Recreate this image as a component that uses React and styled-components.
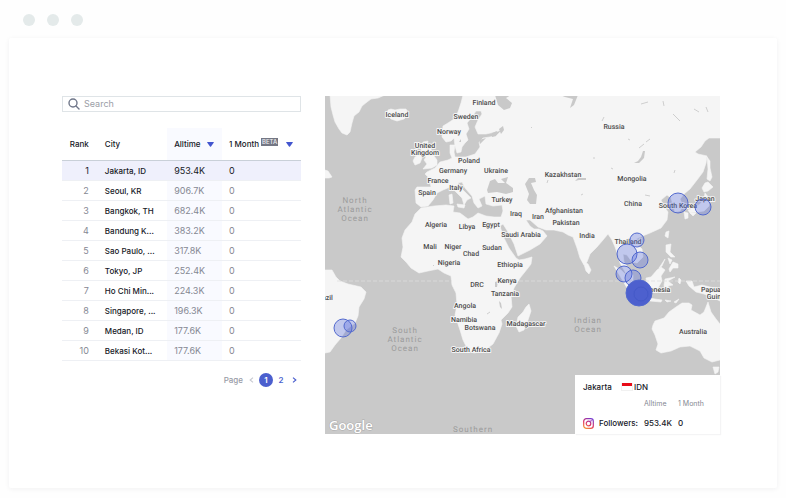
import React, { useState } from "react";
import styled, { createGlobalStyle } from "styled-components";

const GlobalStyle = createGlobalStyle`
  * { box-sizing: border-box; }
  body {
    margin: 0;
    background: #fefefe;
    color: #16181f;
    font-family: Inter, "Liberation Sans", sans-serif;
    font-size: 8px;
    line-height: 12px;
  }
  button, input { font: inherit; color: inherit; }
`;

const Page = styled.div`
  display: flex;
  flex-direction: column;
  min-height: 100vh;
  padding: 0 9px 10px;
`;

const WindowBar = styled.header`
  display: flex;
  align-items: center;
  gap: 12px;
  height: 38px;
  padding: 2px 0 0 14px;
`;

const Dot = styled.span`
  width: 12px;
  height: 12px;
  border-radius: 50%;
  background: #e4eaea;
`;

const Card = styled.main`
  flex: 1;
  display: grid;
  grid-template-columns: minmax(0, 239fr) minmax(0, 395fr);
  align-items: start;
  gap: 24px;
  padding: 58px 57px 54px 53px;
  background: #fff;
  border-radius: 2px;
  box-shadow: 0 1px 5px rgba(30, 40, 50, 0.06);
`;

const Panel = styled.section`
  display: flex;
  flex-direction: column;
`;

const SearchBox = styled.label`
  display: flex;
  align-items: center;
  gap: 4px;
  height: 16px;
  padding: 0 5px;
  border: 1px solid #dfe4e7;
  color: #70778a;
`;

const SearchInput = styled.input`
  flex: 1;
  min-width: 0;
  padding: 0;
  border: 0;
  outline: 0;
  background: none;
  color: #16181f;
  font-size: 9px;
  &::placeholder { color: #9b9ea6; opacity: 1; }
`;

const Table = styled.table`
  width: 100%;
  margin-top: 16px;
  table-layout: fixed;
  border-collapse: separate;
  border-spacing: 0;
`;

const Column = styled.col`
  width: ${(p) => p.$share}%;
`;

const HeadCell = styled.th`
  height: 33px;
  padding: ${(p) => (p.$right ? "0 9px 0 0" : "0 0 0 7px")};
  border-bottom: 1px solid #c9d0d8;
  background: ${(p) => (p.$tint ? "#f9faff" : "transparent")};
  text-align: ${(p) => (p.$right ? "right" : "left")};
  font-weight: 500;
  font-size: 8px;
  white-space: nowrap;
`;

const HeadContent = styled.span`
  display: flex;
  align-items: center;
  justify-content: space-between;
  padding-right: 8px;
`;

const Beta = styled.sup`
  display: inline-block;
  margin-left: 2px;
  padding: 0 1px;
  background: #747784;
  color: #f1f1f4;
  font-size: 6px;
  line-height: 8px;
  vertical-align: 3px;
`;

const SortButton = styled.button`
  display: flex;
  padding: 0;
  border: 0;
  background: none;
  color: #4356cf;
  cursor: pointer;
`;

const Row = styled.tr`
  background: ${(p) => (p.$active ? "#eff0fc" : "transparent")};
  color: ${(p) => (p.$active ? "#16181f" : "#858893")};
`;

const Cell = styled.td`
  height: 20px;
  padding: ${(p) => (p.$right ? "0 9px 0 0" : "0 0 0 7px")};
  border-bottom: 1px solid #eef0f4;
  background: ${(p) => (p.$tint ? "#f9faff" : "transparent")};
  text-align: ${(p) => (p.$right ? "right" : "left")};
  font-size: 9px;
  white-space: nowrap;
`;

const CityCell = styled(Cell)`
  color: #16181f;
  font-size: 8px;
  font-weight: 500;
`;

const Pager = styled.nav`
  display: flex;
  align-items: center;
  justify-content: flex-end;
  gap: 3px;
  margin-top: 12px;
  padding-right: 2px;
  color: #989ba6;
  font-weight: 500;
`;

const PageButton = styled.button`
  display: flex;
  align-items: center;
  justify-content: center;
  width: ${(p) => (p.$current ? "14px" : "10px")};
  height: 14px;
  padding: 0;
  border: 0;
  border-radius: 7px;
  background: ${(p) => (p.$current ? "#4b5fce" : "none")};
  color: ${(p) => (p.$current ? "#fff" : p.disabled ? "#c8cad2" : "#4b5fce")};
  font-weight: 600;
`;

const MapFrame = styled.section`
  position: relative;
`;

const MapDrawing = styled.svg`
  display: block;
  width: 100%;
  height: auto;
  background: #c9c9c9;
`;

const Country = styled.text`
  fill: #4c4c4c;
  stroke: #f5f5f5;
  stroke-width: 2px;
  stroke-linejoin: round;
  paint-order: stroke;
  font: 500 7px Roboto, sans-serif;
  text-rendering: geometricPrecision;
  text-anchor: middle;
`;

const Ocean = styled.text`
  fill: #9b9b9b;
  font: 400 8px Roboto, sans-serif;
  letter-spacing: 1px;
  text-rendering: geometricPrecision;
  text-anchor: middle;
`;

const Logo = styled.text`
  fill: #fff;
  stroke: #aaa;
  stroke-width: 1px;
  paint-order: stroke;
  font: 600 13px "Open Sans", sans-serif;
`;

const Bubble = styled.circle`
  fill: ${(p) => (p.$solid ? "#4d60ce" : "rgba(83, 106, 220, 0.32)")};
  stroke: #5269ce;
  stroke-width: 1;
`;

const Popup = styled.aside`
  position: absolute;
  right: 0;
  bottom: 0;
  width: 145px;
  padding: 6px 8px 5px;
  background: #fff;
  box-shadow: 1px 1px 1px rgba(30, 40, 50, 0.05);
`;

const Place = styled.div`
  display: flex;
  align-items: center;
  font-weight: 500;
`;

const PlaceName = styled.span`
  width: 38px;
`;

const Flag = styled.span`
  width: 12px;
  height: 8px;
  margin-right: 1px;
  border: 1px solid #f1f1f1;
  border-top: 0;
  background: linear-gradient(#e80c18 50%, #fff 50%);
`;

const Stats = styled.table`
  margin-top: 5px;
  border-collapse: collapse;
`;

const StatHead = styled.th`
  padding: 0 0 7px;
  color: #858893;
  font-size: 7px;
  font-weight: 400;
  text-align: left;
`;

const StatLabel = styled.th`
  width: 61px;
  padding: 0;
  font-weight: 500;
  text-align: left;
`;

const StatName = styled.span`
  display: flex;
  align-items: center;
  gap: 5px;
`;

const StatValue = styled.td`
  width: 34px;
  padding: 0;
  font-weight: 500;
`;

const cities = [
  ["Jakarta, ID", "953.4K"],
  ["Seoul, KR", "906.7K"],
  ["Bangkok, TH", "682.4K"],
  ["Bandung K...", "383.2K"],
  ["Sao Paulo, ...", "317.8K"],
  ["Tokyo, JP", "252.4K"],
  ["Ho Chi Min...", "224.3K"],
  ["Singapore, ...", "196.3K"],
  ["Medan, ID", "177.6K"],
  ["Bekasi Kot...", "177.6K"],
];

const land = [
  // Greenland, Newfoundland, Iceland, British Isles
  "M330 95L331 107 333 115 335 122 339 129 342 133 347 135 350 132 352 123 354 116 359 112 362 106 367 102 371 99 378 98 385 95Z",
  "M325 170L328 171 330 174 332 177 329 178 325 178Z",
  "M388 110L391 109 395 110 400 109 406 109 409 114 404 119 397 121 391 119 387 115Z",
  "M423 142L428 141 427 146 431 149 434 156 437 160 437 165 432 168 423 169 427 164 424 160 426 157 421 150Z",
  "M415 157L420 154 422 158 420 163 415 165 413 161Z",
  // Europe, Africa and Asia
  "M463 95L461 103 458 112 454 119 448 123 443 126 442 137 446 142 451 141 454 138 455 146 457 153 461 152 462 147 465 143 468 140 466 134 469 129 467 123 472 117 476 111 481 111 482 114 478 120 475 127 478 134 486 134 495 132 502 130 496 136 483 138 479 142 480 147 475 154 466 157 455 157 454 152 455 145 450 145 450 153 452 158 448 160 440 162 435 168 427 172 425 174 429 178 431 187 417 187 415 190 416 203 421 207 428 206 433 200 437 193 443 190 450 187 455 191 462 198 464 205 467 200 471 198 465 192 459 186 458 183 462 182 465 188 472 196 474 203 478 208 482 206 479 199 485 196 486 204 493 206 502 205 503 211 501 217 494 217 486 216 478 213 473 217 468 219 460 213 453 212 454 206 446 205 434 206 421 208 415 214 412 222 405 230 402 238 403 247 401 257 406 262 411 268 419 273 428 271 438 269 444 273 451 276 452 285 456 293 457 305 455 315 460 330 463 340 468 350 474 353 484 351 493 344 499 333 502 324 501 320 508 313 512 307 511 296 514 288 520 278 528 268 531 264 532 257 525 259 519 260 516 258 509 248 503 236 500 226 503 224 508 232 514 244 518 256 530 250 540 244 547 236 543 231 539 229 534 229 530 226 526 220 530 220 538 227 546 230 554 230 563 232 568 235 573 237 577 248 580 258 584 265 587 262 590 254 597 247 603 240 608 234 612 240 615 247 618 255 620 263 624 270 628 277 633 281 633 275 629 269 624 262 623 254 627 255 632 262 637 263 643 257 642 249 637 244 636 239 640 237 650 233 661 228 667 220 668 212 663 205 661 200 667 195 671 198 673 205 675 212 680 211 683 206 680 199 684 194 690 189 697 180 703 172 706 163 707 156 698 154 695 152 701 147 705 141 709 138 720 138 720 95Z",
  // Mediterranean and Indian Ocean islands
  "M449 195L452 194 453 203 450 204ZM457 204L465 205 464 208 458 207Z",
  "M583 261L588 264 591 270 589 274 586 271Z",
  "M529 304L531 311 528 320 524 330 519 332 516 326 518 317 523 312 526 307Z",
  // Japan and Sakhalin
  "M707 157L710 161 710 168 712 177 710 181 707 179 708 169Z",
  "M705 183L708 182 713 187 708 191 704 192 702 188Z",
  "M705 193L709 198 709 206 704 211 697 212 690 213 688 210 695 208 701 203 704 199ZM684 212L688 213 688 218 685 219ZM690 213L696 213 693 216Z",
  // Taiwan and Philippines
  "M666 232L669 231 668 238 665 236Z",
  "M666 245L671 244 670 252 675 257 671 257 666 252ZM673 262L678 264 678 268 673 268 670 272 669 269ZM668 258L672 260 670 264ZM659 268L665 259 662 266Z",
  // Indonesia and New Guinea
  "M614 266L621 270 631 280 637 290 635 294 627 288 620 276Z",
  "M646 278L651 277 657 270 661 267 665 270 661 276 662 281 658 288 651 289 647 286Z",
  "M665 279L675 277 668 281 673 285 668 286 670 291 665 291 664 285Z",
  "M644 297L655 299 662 300 661 302 650 301ZM665 300L671 301 667 302ZM674 302L679 299 676 303Z",
  "M679 278L681 280 680 284 678 282Z",
  "M686 281L692 281 694 287 702 285 714 288 720 291 720 301 712 297 704 294 696 292 689 286Z",
  // Australia and Tasmania
  "M653 325L655 321 664 318 669 312 676 307 682 303 689 303 692 305 691 310 700 315 704 312 708 302 711 312 716 319 720 324 720 360 712 362 704 358 700 351 696 349 690 346 680 347 671 351 661 353 656 350 658 344 655 335 652 329Z",
  "M713 367L719 367 718 372 715 374Z",
  // Brazil
  "M325 270L332 270 336 277 340 281 348 284 361 287 366 292 364 299 359 307 358 316 355 323 346 330 341 338 335 345 330 352 325 353Z",
];

const lakes = [
  "M487 190L490 181 495 179 498 183 505 183 501 179 508 177 506 183 513 188 513 192 506 194 497 192 488 193Z",
  "M525 184L529 178 535 178 536 182 531 183 534 190 537 195 536 204 530 204 527 200 529 194Z",
  "M495 95L498 105 504 110 510 108 512 103 506 98 511 95ZM560 95L578 95 574 105 570 108 573 99 565 97Z",
  "M479 140L486 138 480 144ZM492 133L497 131 496 136 492 137ZM499 129L503 126 504 130 501 134ZM461 139L459 142 461 142Z",
  "M634 163L638 161 641 157 643 151 645 151 644 158 639 163Z",
  "M495 282L498 281 497 287 495 287ZM499 301L501 303 502 309 500 307ZM575 181L578 178 586 178 586 180 579 180Z",
  "M668 205L673 205 674 208 669 209Z",
];

const countries = [
  ["Finland", 484, 105], ["Sweden", 466, 119], ["Norway", 449, 134], ["Iceland", 397, 117],
  ["United", 425, 148], ["Kingdom", 425, 155], ["Poland", 469, 163], ["Germany", 453, 173],
  ["Ukraine", 496, 173], ["France", 438, 183], ["Italy", 456, 190], ["Spain", 427, 195],
  ["Turkey", 502, 202], ["Iraq", 516, 216], ["Iran", 538, 219], ["Algeria", 436, 227],
  ["Libya", 467, 229], ["Egypt", 491, 227], ["Saudi Arabia", 521, 237], ["Mali", 430, 249],
  ["Niger", 453, 249], ["Chad", 471, 256], ["Sudan", 492, 250], ["Nigeria", 449, 265],
  ["Ethiopia", 510, 267], ["Kenya", 507, 283], ["DRC", 477, 287], ["Tanzania", 505, 296],
  ["Angola", 465, 308], ["Namibia", 464, 322], ["Botswana", 480, 330], ["South Africa", 471, 352],
  ["Madagascar", 526, 326], ["Russia", 614, 129], ["Kazakhstan", 563, 177], ["Mongolia", 632, 181],
  ["China", 633, 206], ["Afghanistan", 564, 213], ["Pakistan", 566, 225], ["India", 587, 238],
  ["South Korea", 678, 208], ["Japan", 705, 201], ["Thailand", 628, 244], ["Indonesia", 655, 292],
  ["Papua", 711, 292], ["Guin", 714, 299], ["Australia", 693, 334], ["Brazil", 324, 300],
];

const oceans = [
  ["North", 355, 203], ["Atlantic", 355, 212], ["Ocean", 355, 221],
  ["South", 405, 333], ["Atlantic", 405, 342], ["Ocean", 405, 351],
  ["Indian", 588, 323], ["Ocean", 588, 332], ["Southern", 473, 432],
];

const bubbles = [
  [343, 328, 9], [350, 326, 6], [678, 203, 10], [703, 207, 8], [637, 240, 7],
  [627, 254, 10], [640, 260, 8], [624, 274, 8], [633, 278, 8],
];

function SearchIcon() {
  return (
    <svg width="12" height="12" viewBox="0 0 12 12" fill="none" stroke="currentColor" strokeWidth="1.4" aria-hidden="true">
      <circle cx="5" cy="5" r="4" />
      <path d="M8 8L11 11" strokeLinecap="round" />
    </svg>
  );
}

function Sort({ label }) {
  return (
    <SortButton type="button" aria-label={label}>
      <svg width="7" height="5" viewBox="0 0 7 5" fill="currentColor" aria-hidden="true">
        <path d="M.4 0H6.6Q7 .3 6.7.8L4 4.6Q3.5 5 3 4.6L.3.8Q0 .3.4 0Z" />
      </svg>
    </SortButton>
  );
}

function Chevron({ back }) {
  return (
    <svg width="5" height="6" viewBox="0 0 5 6" fill="none" stroke="currentColor" strokeWidth="1.2" aria-hidden="true">
      <path d={back ? "M4 .6L1.2 3 4 5.4" : "M1 .6L3.8 3 1 5.4"} />
    </svg>
  );
}

function InstagramIcon() {
  return (
    <svg width="11" height="11" viewBox="0 0 11 11" fill="none" aria-hidden="true">
      <defs>
        <linearGradient id="insta" x1="2" y1="11" x2="8" y2="0" gradientUnits="userSpaceOnUse">
          <stop stopColor="#f6a02c" />
          <stop offset=".45" stopColor="#e2305c" />
          <stop offset="1" stopColor="#713bd4" />
        </linearGradient>
      </defs>
      <g stroke="url(#insta)" strokeWidth="1.2">
        <rect x=".7" y=".7" width="9.6" height="9.6" rx="2.6" />
        <circle cx="5.5" cy="5.5" r="2.3" />
      </g>
      <circle cx="8.1" cy="2.8" r=".7" fill="#9a35be" />
    </svg>
  );
}

function CityTable() {
  return (
    <Table>
      <colgroup>
        <Column $share={15} />
        <Column $share={29} />
        <Column $share={23} />
        <Column $share={33} />
      </colgroup>
      <thead>
        <tr>
          <HeadCell scope="col" $right>Rank</HeadCell>
          <HeadCell scope="col">City</HeadCell>
          <HeadCell scope="col" $tint>
            <HeadContent>Alltime<Sort label="Sort by all time" /></HeadContent>
          </HeadCell>
          <HeadCell scope="col">
            <HeadContent>
              <span>1 Month<Beta>BETA</Beta></span>
              <Sort label="Sort by one month" />
            </HeadContent>
          </HeadCell>
        </tr>
      </thead>
      <tbody>
        {cities.map(([city, total], i) => (
          <Row key={city} $active={i === 0}>
            <Cell $right>{i + 1}</Cell>
            <CityCell>{city}</CityCell>
            <Cell $tint={i > 0}>{total}</Cell>
            <Cell>0</Cell>
          </Row>
        ))}
      </tbody>
    </Table>
  );
}

function WorldMap() {
  return (
    <MapDrawing viewBox="325 96 395 338" role="img" aria-label="Followers by city">
      <g fill="#f5f5f5" stroke="#f5f5f5" strokeWidth=".6" strokeLinejoin="round">
        {land.map((d) => <path key={d} d={d} />)}
      </g>
      <g fill="#c9c9c9">
        {lakes.map((d) => <path key={d} d={d} />)}
      </g>
      <path
        fill="none"
        stroke="#c4c4c4"
        strokeWidth=".8"
        d="M602 121L604 117M663 101L664 106M641 104L648 102M673 114L680 121M628 139L630 140M639 148L644 144M646 142L650 139M694 109L699 112M706 107L708 112M675 170L674 173M581 195L583 194M611 168L613 169M531 127L532 128M593 158L595 158M645 195L650 196M547 183L548 180M487 314L490 312M433 265L434 266"
      />
      <path d="M337 281H452M519 281H720" stroke="#dedede" strokeWidth=".8" strokeDasharray="4 2" />
      {oceans.map(([name, x, y]) => <Ocean key={`${name}${x}${y}`} x={x} y={y}>{name}</Ocean>)}
      {countries.map(([name, x, y]) => <Country key={name} x={x} y={y}>{name}</Country>)}
      {bubbles.map(([x, y, r]) => <Bubble key={`${x}-${y}`} cx={x} cy={y} r={r} />)}
      <Bubble $solid cx={639} cy={293} r={13} />
      <circle cx="641" cy="294" r="7" fill="none" stroke="#4459c8" />
      <Logo x="329" y="430">Google</Logo>
    </MapDrawing>
  );
}

export default function App() {
  const [query, setQuery] = useState("");
  return (
    <>
      <GlobalStyle />
      <Page>
        <WindowBar><Dot /><Dot /><Dot /></WindowBar>
        <Card>
          <Panel>
            <SearchBox>
              <SearchIcon />
              <SearchInput aria-label="Search" placeholder="Search" value={query} onChange={(e) => setQuery(e.target.value)} />
            </SearchBox>
            <CityTable />
            <Pager aria-label="Pages">
              <span>Page</span>
              <PageButton type="button" aria-label="Previous page" disabled><Chevron back /></PageButton>
              <PageButton type="button" aria-current="page" $current>1</PageButton>
              <PageButton type="button">2</PageButton>
              <PageButton type="button" aria-label="Next page"><Chevron /></PageButton>
            </Pager>
          </Panel>
          <MapFrame>
            <WorldMap />
            <Popup>
              <Place>
                <PlaceName>Jakarta</PlaceName>
                <Flag />
                <span>IDN</span>
              </Place>
              <Stats>
                <thead>
                  <tr>
                    <td />
                    <StatHead scope="col">Alltime</StatHead>
                    <StatHead scope="col">1 Month</StatHead>
                  </tr>
                </thead>
                <tbody>
                  <tr>
                    <StatLabel scope="row"><StatName><InstagramIcon />Followers:</StatName></StatLabel>
                    <StatValue>953.4K</StatValue>
                    <StatValue>0</StatValue>
                  </tr>
                </tbody>
              </Stats>
            </Popup>
          </MapFrame>
        </Card>
      </Page>
    </>
  );
}
